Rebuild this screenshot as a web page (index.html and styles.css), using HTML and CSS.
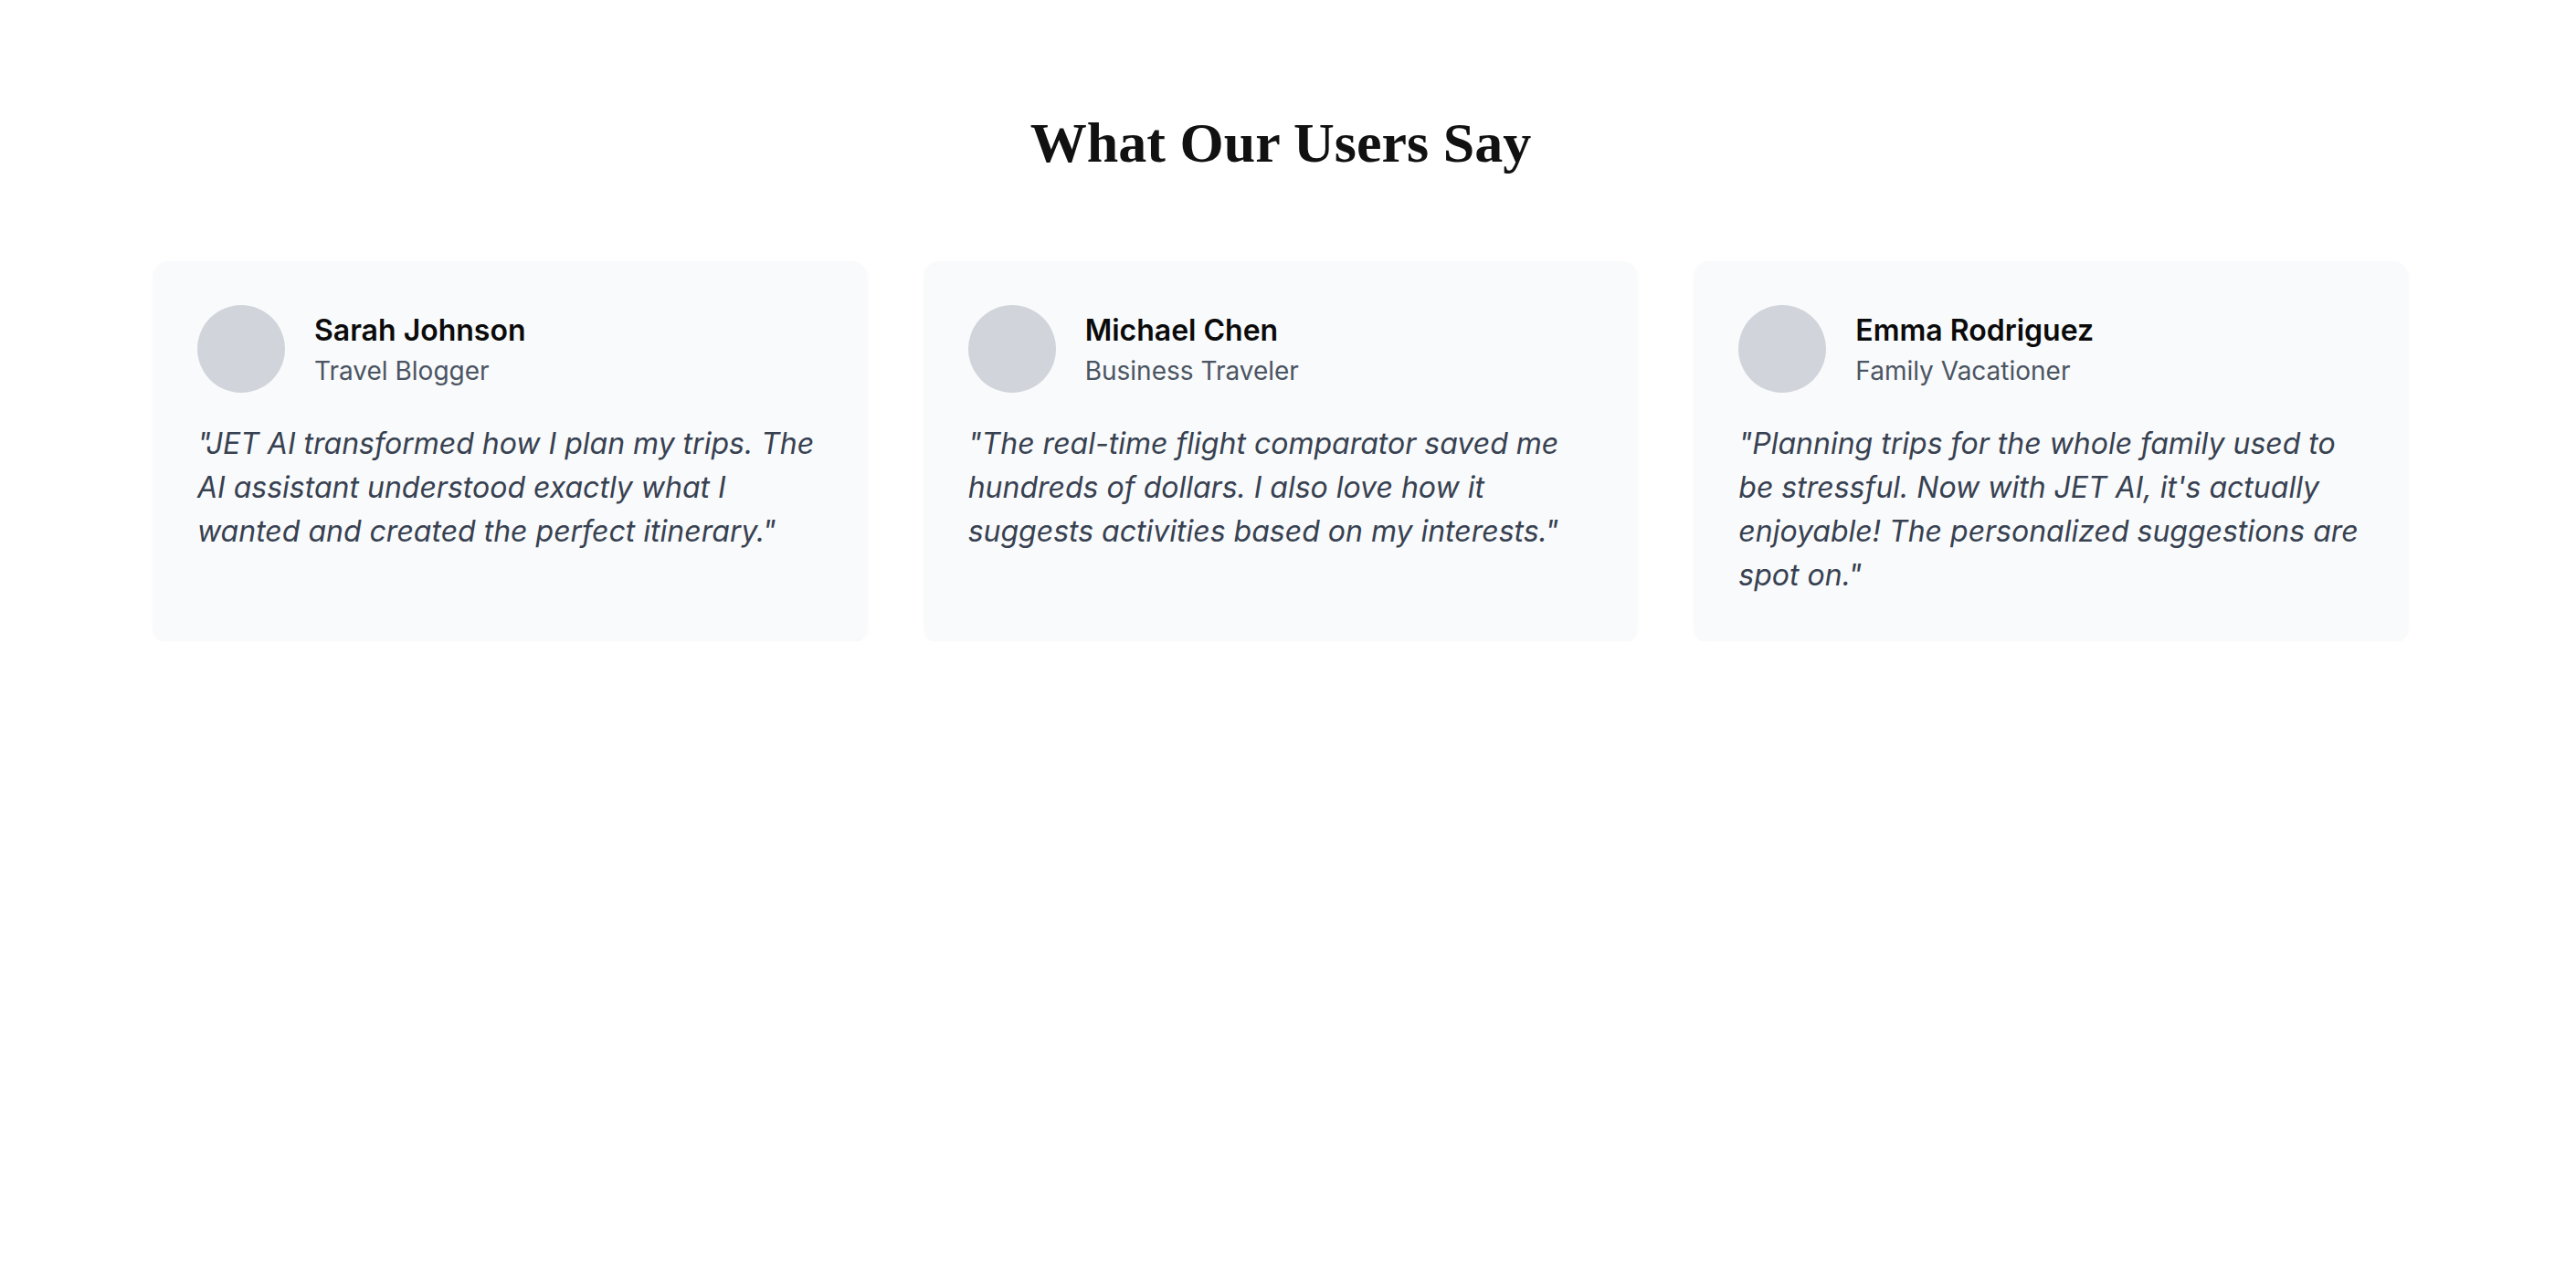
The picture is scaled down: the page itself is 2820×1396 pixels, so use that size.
FILE: index.html
```html
<!DOCTYPE html>
<html lang="en">
<head>
<meta charset="utf-8">
<title>What Our Users Say</title>
<link rel="stylesheet" href="styles.css">
</head>
<body>
<section class="testimonials">
  <h2 class="title">What Our Users Say</h2>
  <div class="grid">
    <div class="card">
      <div class="person">
        <div class="avatar"></div>
        <div class="info">
          <div class="name">Sarah Johnson</div>
          <div class="role">Travel Blogger</div>
        </div>
      </div>
      <p class="quote">"JET AI transformed how I plan my trips. The AI assistant understood exactly what I wanted and created the perfect itinerary."</p>
    </div>
    <div class="card">
      <div class="person">
        <div class="avatar"></div>
        <div class="info">
          <div class="name">Michael Chen</div>
          <div class="role">Business Traveler</div>
        </div>
      </div>
      <p class="quote">"The real-time flight comparator saved me hundreds of dollars. I also love how it suggests activities based on my interests."</p>
    </div>
    <div class="card">
      <div class="person">
        <div class="avatar"></div>
        <div class="info">
          <div class="name">Emma Rodriguez</div>
          <div class="role">Family Vacationer</div>
        </div>
      </div>
      <p class="quote">"Planning trips for the whole family used to be stressful. Now with JET AI, it's actually enjoyable! The personalized suggestions are spot on."</p>
    </div>
  </div>
</section>
</body>
</html>
```

FILE: styles.css
```css
html, body {
  margin: 0;
  padding: 0;
  background: #ffffff;
}

body {
  font-family: "Inter", "Liberation Sans", sans-serif;
  color: #111827;
}

.testimonials {
  padding: 120px 184px 0 168px;
}

.title {
  margin: 0 0 94px 0;
  font-family: "Liberation Serif", "DejaVu Serif", serif;
  font-weight: 700;
  font-size: 62px;
  line-height: 72px;
  text-align: center;
  color: #111111;
}

.grid {
  display: grid;
  grid-template-columns: repeat(3, 1fr);
  gap: 63px;
}

.card {
  background: #f9fafb;
  border-radius: 16px;
  padding: 48px;
  box-shadow: 0 2px 4px rgba(0, 0, 0, 0.04);
}

.person {
  display: flex;
  align-items: center;
  gap: 32px;
  margin-bottom: 32px;
}

.avatar {
  width: 96px;
  height: 96px;
  border-radius: 50%;
  background: #d1d5db;
  flex-shrink: 0;
}

.name {
  font-size: 32px;
  line-height: 48px;
  font-weight: 600;
  color: #0b0b0b;
}

.role {
  font-size: 28px;
  line-height: 40px;
  color: #4b5563;
}

.quote {
  margin: 0;
  font-size: 32px;
  line-height: 48px;
  font-style: italic;
  color: #374151;
}
```
